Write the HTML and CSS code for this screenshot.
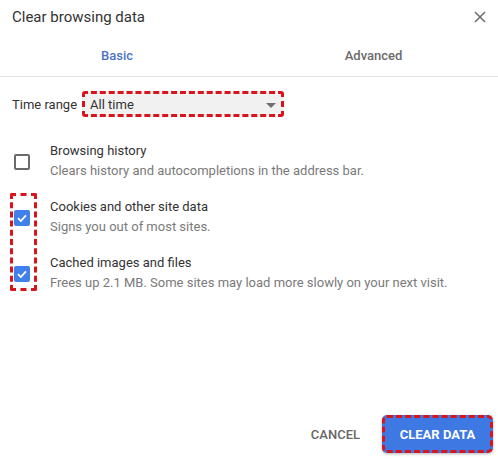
FILE: index.html
```html
<!DOCTYPE html>
<html lang="en">
<head>
  <meta charset="UTF-8" />
  <title>Clear browsing data</title>
  <link rel="stylesheet" href="styles.css">
</head>
<body>
  <div class="dialog">
    <div class="header">
      <div class="title">Clear browsing data</div>
      <button class="close" aria-label="Close">
        <svg width="12" height="12" viewBox="0 0 12 12">
          <path d="M1 1L11 11M11 1L1 11" stroke="#6e6e6e" stroke-width="1.6" fill="none"/>
        </svg>
      </button>
    </div>

    <div class="tabs">
      <div class="tab active">Basic</div>
      <div class="tab">Advanced</div>
    </div>

    <div class="content">
      <div class="time-range">
        <span class="label">Time range</span>
        <div class="select">
          <span>All time</span>
          <span class="arrow"></span>
        </div>
      </div>

      <div class="options">
        <div class="mark"></div>
        <div class="option">
          <div class="checkbox"></div>
          <div class="text">
            <div class="name">Browsing history</div>
            <div class="desc">Clears history and autocompletions in the address bar.</div>
          </div>
        </div>
        <div class="option">
          <div class="checkbox checked">
            <svg width="12" height="12" viewBox="0 0 12 12"><path d="M2 6.2L4.8 9L10 3.4" stroke="#fff" stroke-width="1.8" fill="none"/></svg>
          </div>
          <div class="text">
            <div class="name">Cookies and other site data</div>
            <div class="desc">Signs you out of most sites.</div>
          </div>
        </div>
        <div class="option">
          <div class="checkbox checked">
            <svg width="12" height="12" viewBox="0 0 12 12"><path d="M2 6.2L4.8 9L10 3.4" stroke="#fff" stroke-width="1.8" fill="none"/></svg>
          </div>
          <div class="text">
            <div class="name">Cached images and files</div>
            <div class="desc">Frees up 2.1 MB. Some sites may load more slowly on your next visit.</div>
          </div>
        </div>
      </div>
    </div>

    <div class="footer">
      <button class="cancel">CANCEL</button>
      <button class="clear">CLEAR DATA</button>
    </div>
  </div>
</body>
</html>
```

FILE: styles.css
```css
/* ======= Общие стили ======= */
body {
  margin: 0;
  background: #fff;
  font-family: Roboto, "Liberation Sans", Arial, sans-serif;
  color: #202124;
}
.dialog {
  width: 498px;
  height: 460px;
  display: flex;
  flex-direction: column;
}

/* ======= Заголовок ======= */
.header {
  height: 34px;
  display: flex;
  align-items: center;
  justify-content: space-between;
  padding: 0 6px 0 12px;
}
.title {
  font-size: 15px;
  color: #333;
}
.close {
  background: none;
  border: none;
  width: 24px;
  height: 24px;
  padding: 0;
  display: flex;
  align-items: center;
  justify-content: center;
}

/* ======= Вкладки ======= */
.tabs {
  display: grid;
  grid-template-columns: 234px 1fr;
  height: 42px;
  border-bottom: 1px solid #e2e2e2;
}
.tab {
  display: flex;
  align-items: center;
  justify-content: center;
  font-size: 13px;
  font-weight: 500;
  color: #6b6b6b;
}
.tab + .tab {
  padding-left: 15px;
}
.tab.active {
  color: #4c74c6;
}

/* ======= Период ======= */
.content {
  flex: 1;
  position: relative;
}
.time-range {
  display: flex;
  align-items: center;
  margin-top: 14px;
  padding-left: 12px;
  height: 26px;
}
.label {
  font-size: 13px;
  color: #333;
  margin-right: 5px;
}
.select {
  width: 186px;
  height: 20px;
  border: 3px dashed #d8141c;
  border-radius: 3px;
  background: #f1f1f1;
  display: flex;
  align-items: center;
  justify-content: space-between;
  padding: 0 5px 0 5px;
  font-size: 13px;
  color: #333;
}
.arrow {
  width: 0;
  height: 0;
  border-left: 5px solid transparent;
  border-right: 5px solid transparent;
  border-top: 5px solid #6f6f6f;
  margin-top: 2px;
}

/* ======= Список ======= */
.options {
  position: relative;
  margin-top: 24px;
  display: flex;
  flex-direction: column;
  gap: 16px;
}
.option {
  display: flex;
  align-items: center;
  height: 40px;
}
.checkbox {
  width: 12px;
  height: 12px;
  border: 2px solid #6a6a6a;
  border-radius: 2px;
  margin: 2px 20px 0 14px;
  display: flex;
  align-items: center;
  justify-content: center;
}
.checkbox.checked {
  background: #3f80ea;
  border-color: #3f80ea;
}
.text {
  line-height: 20px;
  font-size: 13px;
}
.name {
  color: #333;
}
.desc {
  color: #7a7a7a;
}
/* пунктирная рамка поверх чекбоксов */
.mark {
  position: absolute;
  left: 10px;
  top: 52px;
  width: 21px;
  height: 92px;
  border: 3px dashed #d8141c;
  border-radius: 2px;
}

/* ======= Кнопки ======= */
.footer {
  display: flex;
  justify-content: flex-end;
  align-items: center;
  gap: 22px;
  padding: 0 5px 7px 0;
}
.cancel {
  background: none;
  border: none;
  font-family: inherit;
  font-size: 13px;
  font-weight: 500;
  color: #666;
  padding: 0;
}
.clear {
  width: 111px;
  height: 38px;
  background: #3d78e3;
  color: #fff;
  border: 3px dashed #d8141c;
  border-radius: 5px;
  font-family: inherit;
  font-size: 13px;
  font-weight: 700;
  box-shadow: 0 1px 3px rgba(0, 0, 0, 0.3);
}
```
